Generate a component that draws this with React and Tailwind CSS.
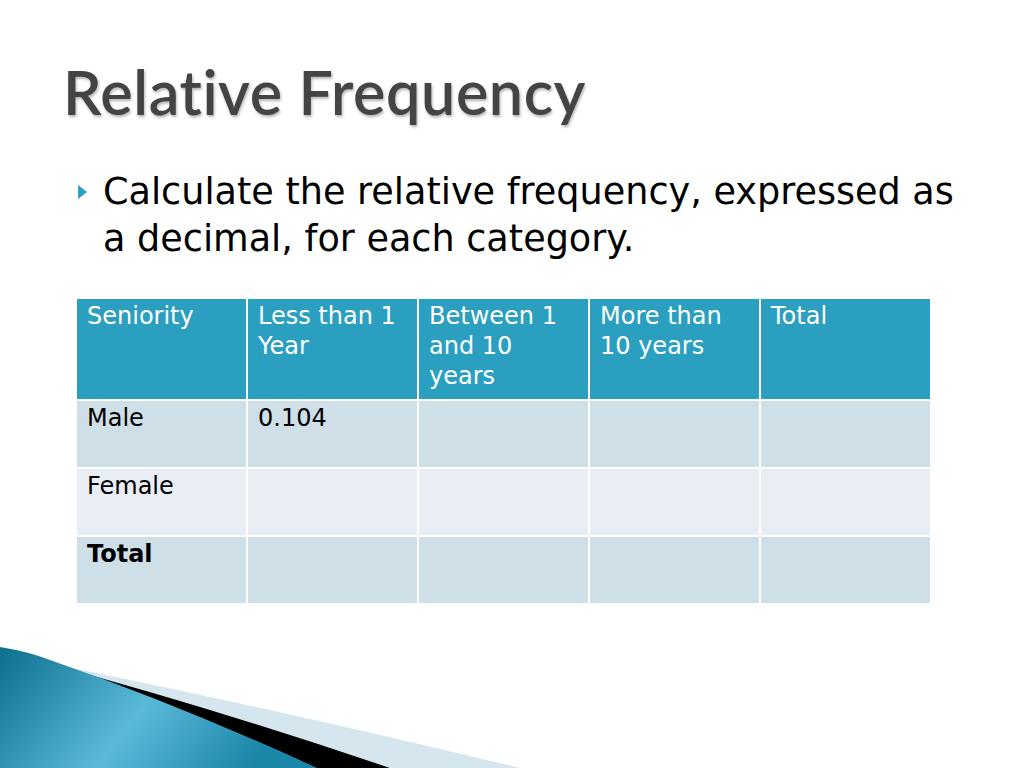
export default function App() {
  const header = ["Seniority", "Less than 1 Year", "Between 1 and 10 years", "More than 10 years", "Total"];
  const rows = [
    { label: "Male", cells: ["0.104", "", "", ""], bg: "bg-[#cfdfe8]", bold: false },
    { label: "Female", cells: ["", "", "", ""], bg: "bg-[#e8eef4]", bold: false },
    { label: "Total", cells: ["", "", "", ""], bg: "bg-[#cfdfe8]", bold: true },
  ];

  return (
    <div className="relative w-[1024px] h-[768px] overflow-hidden bg-white font-['DejaVu_Sans',sans-serif]">
      <h1 className="pl-[63px] pt-[52px] font-['Lato',sans-serif] text-[61px] leading-[80px] font-semibold text-[#444444] [text-shadow:1px_2px_3px_rgba(0,0,0,0.3)] tracking-[0.6px]">
        Relative Frequency
      </h1>

      <div className="flex pl-[77px] pt-[36px]">
        <svg width="12" height="16" viewBox="0 0 12 16" className="mt-[16px] shrink-0">
          <polygon points="1,1 10,8 1,15" fill="#2a9fbf" />
        </svg>
        <p className="ml-[14px] w-[870px] text-[36.6px] leading-[47px] text-black">
          Calculate the relative frequency, expressed as a decimal, for each category.
        </p>
      </div>

      <div className="ml-[77px] mt-[37px] w-[853px] grid grid-cols-5 gap-[2px] text-[24px] leading-[30px]">
        {header.map((h) => (
          <div key={h} className="bg-[#2b9fbf] text-white h-[100px] px-[10px] pt-[2px]">
            {h}
          </div>
        ))}
        {rows.map((r) => (
          <>
            <div key={r.label} className={`${r.bg} h-[66px] px-[10px] pt-[2px] text-black ${r.bold ? "font-bold" : ""}`}>
              {r.label}
            </div>
            {r.cells.map((c, i) => (
              <div key={r.label + i} className={`${r.bg} h-[66px] px-[10px] pt-[2px] text-black`}>
                {c}
              </div>
            ))}
          </>
        ))}
      </div>

      <svg className="absolute left-0 bottom-0" width="620" height="130" viewBox="0 638 620 130">
        <defs>
          <linearGradient id="teal" x1="0" y1="0" x2="1" y2="0.3">
            <stop offset="0" stopColor="#0b6f8d" />
            <stop offset="0.55" stopColor="#5bb9d8" />
            <stop offset="1" stopColor="#1a86a8" />
          </linearGradient>
        </defs>
        <path d="M92 672 Q300 715 520 768 L390 768 Q220 710 50 664 Z" fill="#d6e6ee" />
        <path d="M50 664 Q220 710 390 768 L316 768 Q180 705 40 660 Z" fill="#000" />
        <path d="M0 647 Q30 652 50 660 Q180 705 317 768 L0 768 Z" fill="url(#teal)" />
      </svg>
    </div>
  );
}
